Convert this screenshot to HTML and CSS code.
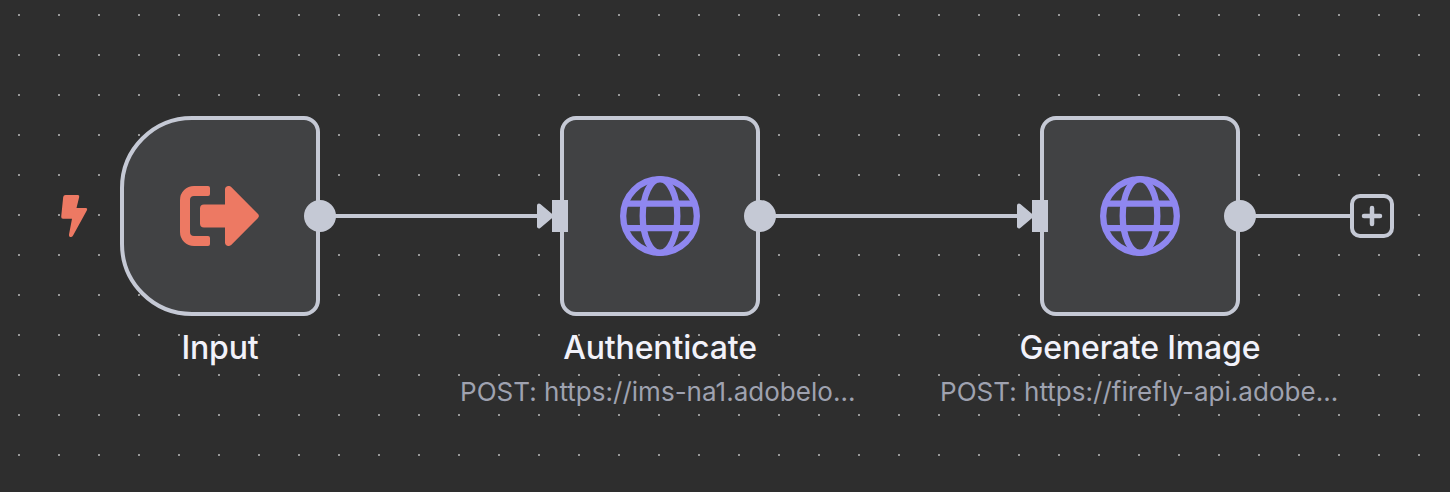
FILE: index.html
```html
<!DOCTYPE html>
<html lang="en">
<head>
<meta charset="utf-8">
<title>Workflow</title>
<link rel="stylesheet" href="styles.css">
</head>
<body>
<main class="canvas">
  <svg class="edges" width="1450" height="492" viewBox="0 0 1450 492">
    <path class="edge" d="M320 216H540M760 216H1020M1240 216H1352"/>
    <path class="arrow" d="M539 205.500L551.500 216L539 226.500ZM1019 205.500L1031.500 216L1019 226.500Z"/>
  </svg>

  <svg class="bolt" width="28" height="44" viewBox="0 0 28 44"><path d="M5.500 1H17.800Q19.700 1 19.200 3L16.500 14H25.500Q28 14 26.800 16.400L13.200 41.200Q12 43.400 10.200 43Q8.600 42.600 9 40.500L12 24.700H3Q1 24.700 1.200 22.500L3.200 3Q3.500 1 5.500 1Z"/></svg>

  <section class="node node-input">
    <div class="box trigger">
      <svg class="input-icon" width="80" height="60" viewBox="0 0 80 60">
        <path d="M14 0H28Q30 0 30 2V8Q30 10 28 10H14Q10 10 10 14V46Q10 50 14 50H28Q30 50 30 52V58Q30 60 28 60H14A14 14 0 0 1 0 46V14A14 14 0 0 1 14 0Z"/>
        <path d="M20 22.500Q20 18.500 24 18.500H45V3.500C45 0 49 -1.200 51.700 1.500L77.800 27.800Q80 30 77.800 32.200L51.700 58.500C49 61.200 45 60 45 56.500V41.500H24Q20 41.500 20 37.500Z"/>
      </svg>
      <i class="output"></i>
    </div>
    <h2 class="title">Input</h2>
  </section>

  <section class="node node-auth">
    <div class="box">
      <svg class="globe" width="80" height="80" viewBox="0 0 80 80"><circle cx="40" cy="40" r="36.850"/><ellipse cx="40" cy="40" rx="17.300" ry="36.850"/><path d="M5 27.600H75M5 52.100H75"/></svg>
      <i class="input"></i><i class="output"></i>
    </div>
    <h2 class="title">Authenticate</h2>
    <p class="subtitle">POST: https://ims-na1.adobelo...</p>
  </section>

  <section class="node node-generate">
    <div class="box">
      <svg class="globe" width="80" height="80" viewBox="0 0 80 80"><circle cx="40" cy="40" r="36.850"/><ellipse cx="40" cy="40" rx="17.300" ry="36.850"/><path d="M5 27.600H75M5 52.100H75"/></svg>
      <i class="input"></i><i class="output"></i>
    </div>
    <h2 class="title">Generate Image</h2>
    <p class="subtitle">POST: https://firefly-api.adobe...</p>
  </section>

  <button class="add" aria-label="Add node"><svg width="36" height="36" viewBox="0 0 36 36"><path d="M18 10V26M10 18H26"/></svg></button>
</main>
</body>
</html>
```
FILE: styles.css
```css
* { box-sizing: border-box; }
body { margin: 0; background: #2e2e2e; }

.canvas {
  position: relative;
  width: 1450px;
  height: 492px;
  overflow: hidden;
  font-family: Inter, "Liberation Sans", sans-serif;
  background: conic-gradient(from 0deg at 2px 2px, #2e2e2e 0 270deg, #989898 270deg) 18px 14px / 40px 40px;
}

.edges { position: absolute; left: 0; top: 0; }
.edge { stroke: #c5c9d5; stroke-width: 4; fill: none; }
.arrow { fill: #c5c9d5; stroke: #c5c9d5; stroke-width: 4; stroke-linejoin: round; }

.bolt { position: absolute; left: 60px; top: 194px; fill: #ed7963; }

.node {
  position: absolute;
  top: 116px;
  width: 400px;
  display: flex;
  flex-direction: column;
  align-items: center;
}
.node-input { left: 20px; }
.node-auth { left: 460px; }
.node-generate { left: 940px; }

.box {
  position: relative;
  display: flex;
  align-items: center;
  justify-content: center;
  width: 200px;
  height: 200px;
  border: 4px solid #c5c9d5;
  border-radius: 16px;
  background: #414244;
}
.trigger { border-radius: 72px 16px 16px 72px; }
.input-icon { fill: #ed7963; }
.globe { fill: none; stroke: #8f87f0; stroke-width: 6.3; }

.output {
  position: absolute;
  right: -20px;
  top: 80px;
  width: 32px;
  height: 32px;
  border-radius: 50%;
  background: #c5c9d5;
}
.input {
  position: absolute;
  left: -12px;
  top: 80px;
  width: 16px;
  height: 32px;
  background: #c5c9d5;
}

.title {
  margin: 12px 0 0;
  font-size: 32px;
  font-weight: 500;
  line-height: 40px;
  letter-spacing: -0.15px;
  color: #f2f2fa;
  white-space: nowrap;
}
.subtitle {
  align-self: flex-start;
  margin: 8px 0 0;
  font-size: 26px;
  line-height: 32px;
  letter-spacing: 0.02px;
  color: #9fa2b0;
  white-space: nowrap;
}

.add {
  position: absolute;
  left: 1350px;
  top: 194px;
  width: 44px;
  height: 44px;
  padding: 0;
  border: 4px solid #c5c9d5;
  border-radius: 10px;
  background: #2e2e2e;
}
.add svg { display: block; fill: none; stroke: #c5c9d5; stroke-width: 4.5; stroke-linecap: round; }
```
